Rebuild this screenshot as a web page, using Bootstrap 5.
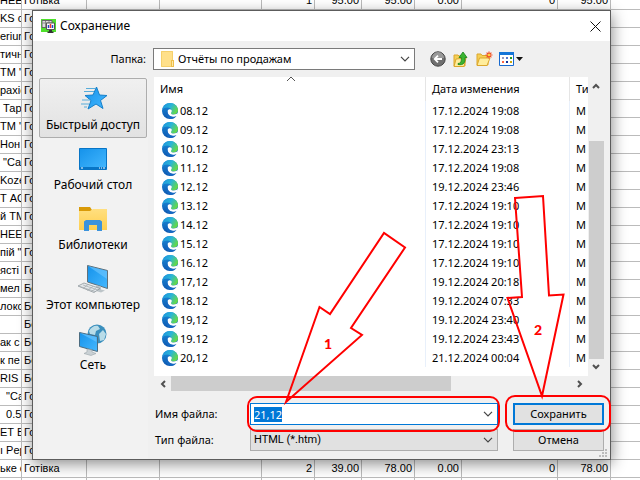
<!DOCTYPE html>
<html lang="ru">
<head>
<meta charset="utf-8">
<meta name="viewport" content="width=device-width, initial-scale=1">
<title>Сохранение</title>
<link href="https://cdn.jsdelivr.net/npm/bootstrap@5.3.0/dist/css/bootstrap.min.css" rel="stylesheet">
<style>
  body { font-family: "Noto Sans", "Open Sans", sans-serif; font-size: 12px; line-height: 16px; color: #000; background: #fff; }
  svg { display: block; flex: none; }
  .desktop { min-height: 100vh; }
  /* spreadsheet behind the dialog */
  .sheet { table-layout: fixed; width: 100%; margin-top: -8px; border-collapse: separate; border-spacing: 0; font: 11px/17px "Liberation Sans", sans-serif; }
  .sheet td { height: 18px; padding: 0 2px; border-right: 1px solid #bbb; border-bottom: 1px solid #bbb; overflow: hidden; white-space: pre; }
  .sheet td:first-child { padding: 0; }
  .sheet td:nth-child(n+5) { text-align: right; }
  .sheet td:last-child { border-right: 0; }
  /* window */
  .save-dialog { top: 10px; left: 32px; right: 29px; background: #f0f0f0; border: 1px solid #5c5c5c; box-shadow: 1px 4px 14px rgba(0,0,0,.45); }
  .title-bar { height: 30px; padding: 0 7px 0 8px; background: #fff; }
  .title-bar button { width: 16px; height: 16px; }
  .bare { border: 0; background: none; padding: 0; color: inherit; }
  .look-in { height: 36px; padding-left: 5px; }
  .look-in label { width: 108px; text-align: right; font-size: 11px; }
  .field { height: 22px; width: 100%; border: 1px solid #7a7a7a; border-radius: 0; background: #fff; color: #000; appearance: none; padding: 0 24px 0 3px; font-size: 11px; line-height: 16px; outline: 0; }
  .field.with-icon { padding-left: 24px; }
  .field.active { border-color: #0078d7; }
  .field.flat { border-color: #adadad; background: #e1e1e1; font-family: Roboto, sans-serif; }
  .field::selection { background: #0078d7; color: #fff; }
  .combo svg { position: absolute; pointer-events: none; top: 50%; transform: translateY(-50%); }
  .combo .chev { right: 5px; }
  .combo .fold { left: 8px; }
  .folder-combo { width: 262px; margin-left: 7px; }
  .tools { gap: 6px; margin-left: 15px; }
  .places { width: 110px; background: #f2f2f2; margin-left: 5px; padding: 1px; }
  .places button { height: 60px; border: 1px solid transparent; border-radius: 2px; padding: 3px 0 4px; color: #000; background: none; }
  .places button.current { border-color: #adadad; background: linear-gradient(#f0f0f0, #e2e2e2); }
  .content { min-width: 0; margin-left: 6px; }
  .files { background: #fff; height: 299px; }
  .files table { table-layout: fixed; width: 100%; border-collapse: separate; border-spacing: 0; font-size: 11px; }
  .files th { font-weight: 400; height: 24px; padding: 0 6px; border-right: 1px solid #e5e5e5; white-space: nowrap; overflow: hidden; }
  .files td { height: 19px; padding: 0 6px; border-right: 1px solid #e8f0fb; white-space: nowrap; overflow: hidden; }
  .files td:first-child { padding-left: 8px; }
  .files th:last-child, .files td:last-child { border-right: 0; padding-right: 0; text-overflow: clip; }
  .file-name { gap: 2px; }
  .vbar { width: 16px; height: 299px; padding: 6px 0; margin-right: 6px; }
  .vbar .thumb { height: 218px; width: 15px; background: #cdcdcd; margin-bottom: 5px; }
  .flip { transform: rotate(180deg); }
  .hbar { height: 15px; padding: 0 26px 0 5px; }
  .hbar .thumb { width: 280px; height: 15px; background: #cdcdcd; }
  .form-grid { display: grid; grid-template-columns: 96px 1fr 91px; row-gap: 4px; padding: 12px 6px 8px 0; align-items: center; font-size: 11px; }
  .form-grid label { padding-left: 1px; }
  .form-grid .combo { margin-right: 15px; }
  .push { height: 22px; border: 1px solid #adadad; background: #e1e1e1; padding: 0; color: #000; }
  .push.primary { border: 2px solid #0078d7; }
  .grip { right: 2px; bottom: 1px; }
  .marks { left: 0; top: 0; pointer-events: none; }
</style>
</head>
<body>
<svg width="0" height="0" class="position-absolute" aria-hidden="true">
  <defs>
    <linearGradient id="eg1" x1="0" y1="0" x2="1" y2=".5"><stop offset="0" stop-color="#1a8fe0"/><stop offset=".55" stop-color="#2bb5d6"/><stop offset="1" stop-color="#63d84c"/></linearGradient>
    <linearGradient id="eg2" x1="0" y1="0" x2="0" y2="1"><stop offset="0" stop-color="#1b8fdc"/><stop offset="1" stop-color="#0d55ad"/></linearGradient>
    <linearGradient id="blue" x1="0" y1="0" x2="1" y2="1"><stop offset="0" stop-color="#1592ea"/><stop offset="1" stop-color="#45b8ff"/></linearGradient>
    <linearGradient id="yel" x1="0" y1="0" x2="0" y2="1"><stop offset="0" stop-color="#ffdf80"/><stop offset="1" stop-color="#ffcf4e"/></linearGradient>
    <symbol id="edge" viewBox="0 0 16 16">
      <circle cx="8" cy="8" r="8" fill="url(#eg2)"/>
      <path d="M0.400 6.500C1 2.800 4.200 0 8 0c4.600 0 8 3.400 8 7.300 0 2.600-2 4.200-4.300 4.200-1.700 0-2.900-.7-2.900-1.300 0-.5.800-.8.800-2.100C9.600 6 7.800 4.600 5.500 4.600 3 4.600 1.200 5.400.4 6.500Z" fill="url(#eg1)"/>
      <path d="M7.500 6.300c1.400-.2 2.500.8 2.300 2-.1.900-.8 1.200-.8 1.900 0 .8 1.200 1.300 2.800 1.300 1.700 0 3.200-.6 4.200-1.700l-.9 3.200c-1 .7-2.600 1.200-4.300 1C7.200 13.700 5.200 11 5.500 8.700c.1-1.200.9-2.200 2-2.400Z" fill="#fff"/>
      <path d="M5.600 8c-.3 3.400 2.600 5.600 5.400 5.700 1.600 0 2.800-.3 3.700-1C13.500 14.700 11 16 8.500 16 4 14.500 3 10.500 5.600 8Z" fill="#1468c2"/>
    </symbol>
    <symbol id="chevron" viewBox="0 0 10 6"><path d="M1 .8 5 4.800 9 .8" fill="none" stroke="#444" stroke-width="1.200"/></symbol>
    <symbol id="arrow" viewBox="0 0 8 6"><path d="M1 5 4 2l3 3" fill="none" stroke="#505050" stroke-width="2"/></symbol>
  </defs>
</svg>

<main class="desktop position-relative overflow-hidden">
  <table class="sheet" aria-label="Продажи">
    <colgroup><col style="width:22px"><col style="width:65px"><col style="width:73px"><col style="width:102px"><col style="width:53px"><col style="width:47px"><col style="width:53px"><col style="width:47px"><col style="width:96px"><col style="width:53px"><col></colgroup>
    <tbody id="sheetRows"></tbody>
  </table>

  <section class="save-dialog position-absolute" role="dialog" aria-label="Сохранение">
    <header class="title-bar d-flex align-items-center gap-1">
      <svg width="15" height="15" viewBox="0 0 15 15"><path fill="#4fe02c" d="M0 0h15v13H0z"/><path d="M1 1.500h10v7H1z" fill="#ddd" stroke="#666"/><path d="M1 4h10M4.500 2v6M8 2v6" stroke="#888"/><path d="M5.500 4h8v6.500h-8z" fill="#fff" stroke="#555"/><path d="M7.500 6v3" stroke="#24c" stroke-width="1.500"/><path d="M9.500 5v4" stroke="#e33" stroke-width="1.500"/><path d="M11.500 6v3" stroke="#24c" stroke-width="1.500"/><path d="M8 11h3v1.500h1.500V14h-6v-1.500H8z" fill="#333"/></svg>
      <span class="flex-grow-1">Сохранение</span>
      <button class="bare d-flex align-items-center justify-content-center" type="button" aria-label="Закрыть"><svg width="11" height="11" viewBox="0 0 11 11"><path d="m.5.5 10 10m0-10-10 10" stroke="#111" fill="none"/></svg></button>
    </header>

    <div class="look-in d-flex align-items-center">
      <label for="folder">Папка:</label>
      <div class="combo folder-combo position-relative">
        <svg class="fold" width="13" height="16" viewBox="0 0 13 16"><path d="M0 0h12v16H0z" fill="#ffe08a"/><path d="M.5.5h11v15H.5z" fill="none" stroke="#f5d06c"/><path d="M10 9h3v7h-3z" fill="#efbf4b"/><path d="M11 10h1v5h-1z" fill="#ffe9a8"/></svg>
        <select id="folder" class="field with-icon"><option>Отчёты по продажам</option></select>
        <svg class="chev" width="10" height="6"><use href="#chevron"/></svg>
      </div>
      <div class="tools d-flex align-items-center">
        <button class="bare" type="button" aria-label="Назад"><svg width="16" height="16" viewBox="0 0 16 16"><circle cx="8" cy="8" r="7.200" fill="#707070" stroke="#444"/><path d="M2 7a6 6 0 0 1 12 0Z" fill="#999"/><path d="M12 8H5m3-3.300L4.700 8 8 11.300" stroke="#fff" stroke-width="1.800" fill="none"/></svg></button>
        <button class="bare" type="button" aria-label="Вверх"><svg width="17" height="17" viewBox="0 0 17 17"><path d="M2 4h4l1 1h6v10H2z" fill="#f5cf56" stroke="#dca72c"/><path d="m4 8 10-1-2 8.500H2z" fill="#ffed9c" stroke="#dca72c"/><path d="M6 12.500c3 0 3.500-2 3.300-6H7L11 1l4 5.500h-2c.3 5-1 8-7 7z" fill="#3bb531" stroke="#16801a" stroke-width=".8"/></svg></button>
        <button class="bare" type="button" aria-label="Новая папка"><svg width="18" height="16" viewBox="0 0 18 16"><path d="M2 3h4l1 1.500h6V14H2z" fill="#f5cf56" stroke="#dca72c"/><path d="M4.500 7H15l-3 7.500H2z" fill="#ffed9c" stroke="#dca72c"/><path d="M14 .5v7M10.500 4h7M11.600 1.600l4.800 4.800m0-4.800-4.800 4.800" stroke="#f04a20" stroke-width="1.200"/><circle cx="14" cy="4" r="1.300" fill="#ffd33c"/></svg></button>
        <button class="bare d-flex align-items-center" type="button" aria-label="Вид"><svg width="15" height="14" viewBox="0 0 15 14"><path d="M.5.5h14v13H.5z" fill="#fff" stroke="#1769cf"/><path d="M0 0h15v3H0z" fill="#1475d8"/><path d="M3 5h2v2H3z" fill="#99b"/><path d="M7 5h2v2H7z" fill="#57c"/><path d="M11 5h2v2h-2z" fill="#292"/><path d="M3 9h2v2H3z" fill="#f64"/><path d="M7 9h2v2H7z" fill="#139"/><path d="M11 9h2v2h-2z" fill="#ca1"/></svg><svg width="9" height="4" viewBox="0 0 9 4"><path d="M2 0h7L5.500 4z" fill="#111"/></svg></button>
      </div>
    </div>

    <div class="d-flex">
      <nav class="places d-flex flex-column flex-shrink-0" aria-label="Места">
        <button class="current d-flex flex-column align-items-center justify-content-between" type="button">
          <svg width="30" height="34" viewBox="0 0 30 34"><path d="m18.500 5 3 8 7.500.5-6.500 5 2.500 8-7-4.500L10 27l3-8.500-6-5 8-.5z" fill="url(#blue)" stroke="#167fc9"/><path d="M8 6.500h9M6 9.500h10M4 18h8M3 22h8M6 25h3" stroke="#58acd9"/></svg>
          <span>Быстрый доступ</span></button>
        <button class="d-flex flex-column align-items-center justify-content-between" type="button">
          <svg width="28" height="34" viewBox="0 0 28 34"><path d="M.5 6.500h27v21H.5z" fill="url(#blue)" stroke="#0875c6"/><path d="M1 25h26v2.500H1z" fill="#0875c6"/><path d="M2 26h2m16 0h1m1 0h1m1 0h2" stroke="#fff"/></svg>
          <span>Рабочий стол</span></button>
        <button class="d-flex flex-column align-items-center justify-content-between" type="button">
          <svg width="28" height="34" viewBox="0 0 28 34"><path d="M0 5h11l2 3v3H0z" fill="#d99a08"/><path d="M0 9h11l3-2h14v21H0z" fill="url(#yel)"/><path d="M5 29V19.500L7 18h14l2 1.500V29h-5v-6h-8v6z" fill="#3b93dc"/></svg>
          <span>Библиотеки</span></button>
        <button class="d-flex flex-column align-items-center justify-content-between" type="button">
          <svg width="32" height="34" viewBox="0 0 32 34"><path d="m10.500 3.500 20 5v18l-20-6.500z" fill="url(#blue)" stroke="#60717b"/><path d="m11 4 19 13V9z" fill="#72c8ff" opacity=".6"/><path d="m19 23 5 1.500v3l4 1-4 2-8-2.500 3-1z" fill="#bcc4c8"/><path d="m1 24 6-3 16 5.500-6 4z" fill="#e4e8ea" stroke="#8f989d" stroke-width=".8"/><path d="m3 24.500 15 5M6 23l15 5M6 26.500l5-4m-1 6 6-4m-2 5 5-3" stroke="#a3abaf" stroke-width=".7"/></svg>
          <span>Этот компьютер</span></button>
        <button class="d-flex flex-column align-items-center justify-content-between" type="button">
          <svg width="28" height="34" viewBox="0 0 28 34"><circle cx="18" cy="12" r="9.500" fill="#3b8fbd"/><path d="M10 9c2-4 6-6 9-5l2 3-4 2-1 4-5-1zm10 3 4-4 3 4-2 6-4 1zM14 17l4-1 1 4-3 1z" fill="#b9dce8"/><path d="m.5 10.500 18 4v15l-18-5z" fill="url(#blue)" stroke="#4c6c80"/><path d="m1 11 16.500 9v-5z" fill="#72c8ff" opacity=".6"/><path d="m8 27 5 1v2l4 1.500-5 2-7-2 3-1.500z" fill="#c9d0d4" stroke="#9aa4a9" stroke-width=".6"/></svg>
          <span>Сеть</span></button>
      </nav>

      <div class="content flex-grow-1">
        <div class="d-flex">
          <div class="files flex-grow-1 overflow-hidden">
            <table>
              <colgroup><col><col style="width:144px"><col style="width:18px"></colgroup>
              <thead><tr><th scope="col">Имя</th><th scope="col">Дата изменения</th><th scope="col">Тип</th></tr></thead>
              <tbody id="fileRows"></tbody>
            </table>
          </div>
          <div class="vbar d-flex flex-column align-items-center justify-content-between flex-shrink-0">
            <svg width="8" height="6"><use href="#arrow"/></svg>
            <div class="d-flex flex-column align-items-center"><div class="thumb"></div>
            <svg class="flip" width="8" height="6"><use href="#arrow"/></svg></div>
          </div>
        </div>
        <div class="hbar d-flex align-items-center gap-1">
          <svg width="8" height="8" viewBox="0 0 8 8"><path d="M6 1 3 4l3 3" fill="none" stroke="#505050" stroke-width="2"/></svg>
          <div class="thumb"></div>
          <svg class="ms-auto" width="8" height="8" viewBox="0 0 8 8"><path d="m2 1 3 3-3 3" fill="none" stroke="#505050" stroke-width="2"/></svg>
        </div>
        <form class="form-grid" onsubmit="return false">
          <label for="fileName">Имя файла:</label>
          <div class="combo position-relative"><input id="fileName" class="field active" type="text" value="21,12" autocomplete="off"><svg class="chev" width="10" height="6"><use href="#chevron"/></svg></div>
          <button class="push primary" type="submit">Сохранить</button>
          <label for="fileType">Тип файла:</label>
          <div class="combo position-relative"><select id="fileType" class="field flat"><option>HTML (*.htm)</option></select><svg class="chev" width="10" height="6"><use href="#chevron"/></svg></div>
          <button class="push" type="button">Отмена</button>
        </form>
      </div>
    </div>
    <svg class="grip position-absolute" width="9" height="9" viewBox="0 0 9 9"><path d="M6 0h2v2H6zM3 3h2v2H3zM6 3h2v2H6zM0 6h2v2H0zM3 6h2v2H3zM6 6h2v2H6z" fill="#bdbdbd"/></svg>
  </section>

  <svg class="marks position-absolute" width="640" height="480" viewBox="0 0 640 480" fill="none" stroke="#f00" stroke-width="2">
    <path d="m287 81 4-4 4 4" stroke="#555" stroke-width="1"/>
    <path d="m286 402 33.500-95 10.500 7 54-81 21 14.500-54 80.500 11 7z"/>
    <path d="m515 198 28-2 6 99.500 14.500-1L542 396l-34.500-98 14.500-1z"/>
    <rect x="248" y="397" width="251" height="34" rx="9"/>
    <rect x="506" y="396" width="104" height="35" rx="9"/>
    <g fill="#f00" stroke="none" font-family="Lato, sans-serif" font-weight="900" font-size="14"><text x="324" y="349">1</text><text x="534" y="335">2</text></g>
  </svg>
</main>

<script src="https://cdn.jsdelivr.net/npm/bootstrap@5.3.0/dist/js/bootstrap.bundle.min.js"></script>
<script>
  const goods = ['HEE', 'KS с', 'erium', 'тичн', 'TM "', 'рахіс', ' Тар', 'TM "', 'Нон', ' "Сан', 'Koze', 'Т AQ', 'й TM', 'HEE', 'пій "', 'ясті', 'мел', 'локс', '', 'ак с', 'к пе', 'RIS F', '  "Са', '  0.5', 'ET B', 'ı Pep', 'ьке с', ''];
  const sums = { 0: ['1', '95.00', '95.00', '0.00', '0', '95.00'], 26: ['2', '39.00', '78.00', '0.00', '0', '78.00'] };
  document.getElementById('sheetRows').innerHTML = goods.map((g, i) => {
    const pay = i === 27 ? '' : i > 15 && i < 22 ? 'Безготівка' : 'Готівка';
    const cells = [g, pay, '', '', ...(sums[i] || ['', '', '', '', '', '']), ''];
    return '<tr>' + cells.map(c => `<td>${c}</td>`).join('') + '</tr>';
  }).join('');

  const files = [['08.12', '17.12.2024 19:08'], ['09.12', '17.12.2024 19:08'], ['10.12', '17.12.2024 23:13'], ['11.12', '17.12.2024 19:08'], ['12.12', '19.12.2024 23:46'], ['13.12', '17.12.2024 19:10'], ['14.12', '17.12.2024 19:10'], ['15.12', '17.12.2024 19:10'], ['16.12', '17.12.2024 19:10'], ['17,12', '19.12.2024 20:18'], ['18.12', '19.12.2024 07:33'], ['19,12', '19.12.2024 23:40'], ['19.12', '19.12.2024 23:43'], ['20,12', '21.12.2024 00:04']];
  document.getElementById('fileRows').innerHTML = files.map(([name, date]) =>
    `<tr><td><span class="file-name d-flex align-items-center"><svg width="16" height="16"><use href="#edge"/></svg>${name}</span></td><td>${date}</td><td>M</td></tr>`).join('');

  const nameField = document.getElementById('fileName');
  nameField.focus();
  nameField.select();
</script>
</body>
</html>
